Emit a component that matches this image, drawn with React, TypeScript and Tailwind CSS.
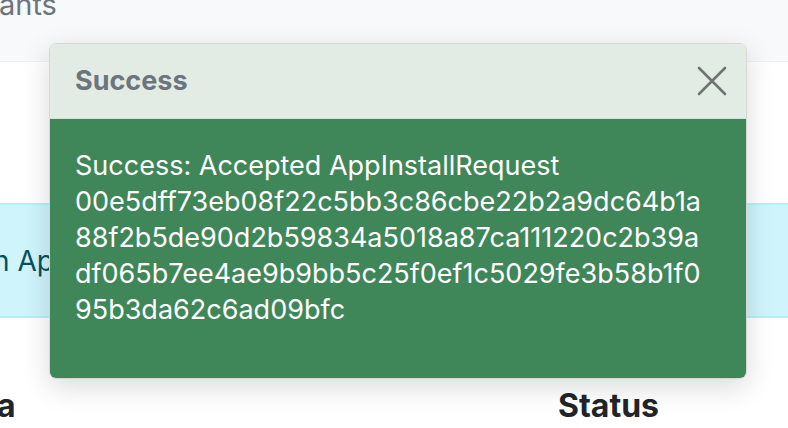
import React from "react";

const lines = [
  "Success: Accepted AppInstallRequest",
  "00e5dff73eb08f22c5bb3c86cbe22b2a9dc64b1a",
  "88f2b5de90d2b59834a5018a87ca111220c2b39a",
  "df065b7ee4ae9b9bb5c25f0ef1c5029fe3b58b1f0",
  "95b3da62c6ad09bfc",
];

export default function App() {
  return (
    <div
      className="relative w-[788px] h-[428px] overflow-hidden bg-white"
      style={{ fontFamily: "Inter, 'Noto Sans', sans-serif" }}
    >
      {/* page behind the toast */}
      <div className="h-[62px] bg-[#f8f9fa] border-b border-[#eef0f2] overflow-hidden">
        <div className="-mt-[13px] -ml-[1px] text-[29px] leading-[36px] text-[#6c757d]">ants</div>
      </div>
      <div className="h-[141px]" />
      <div className="h-[115px] bg-[#cff4fc] border-y-2 border-[#b6effb] flex items-center overflow-hidden">
        <div className="-ml-[7px] text-[28px] text-[#055160]">n Ap</div>
      </div>
      <div className="flex items-end h-[108px] text-[32px] font-bold text-[#212529] leading-[40px]">
        <div className="-ml-[3px] flex-1">a</div>
        <div className="w-[230px]">Status</div>
      </div>

      {/* toast */}
      <div className="absolute left-[49px] top-[43px] w-[698px] h-[336px] rounded-[7px] border border-[#d5d8d6] overflow-hidden shadow-[0_8px_28px_rgba(0,0,0,0.15)] flex flex-col">
        <div className="h-[75px] bg-[#e2ece4] border-b border-[#d6e2d9] flex items-center justify-between pl-[25px] pr-[19px]">
          <span className="text-[27px] font-bold text-[#6c757d]">Success</span>
          <svg width="30" height="30" viewBox="0 0 30 30" className="text-[#6f7470]">
            <path d="M2 2 L28 28 M28 2 L2 28" stroke="currentColor" strokeWidth="2.6" strokeLinecap="round" />
          </svg>
        </div>
        <div className="flex-1 bg-[#3f8659] pl-[25px] pt-[29px] text-white text-[27px] leading-[36px]">
          {lines.map((l) => (
            <div key={l} className="whitespace-nowrap">{l}</div>
          ))}
        </div>
      </div>
    </div>
  );
}
